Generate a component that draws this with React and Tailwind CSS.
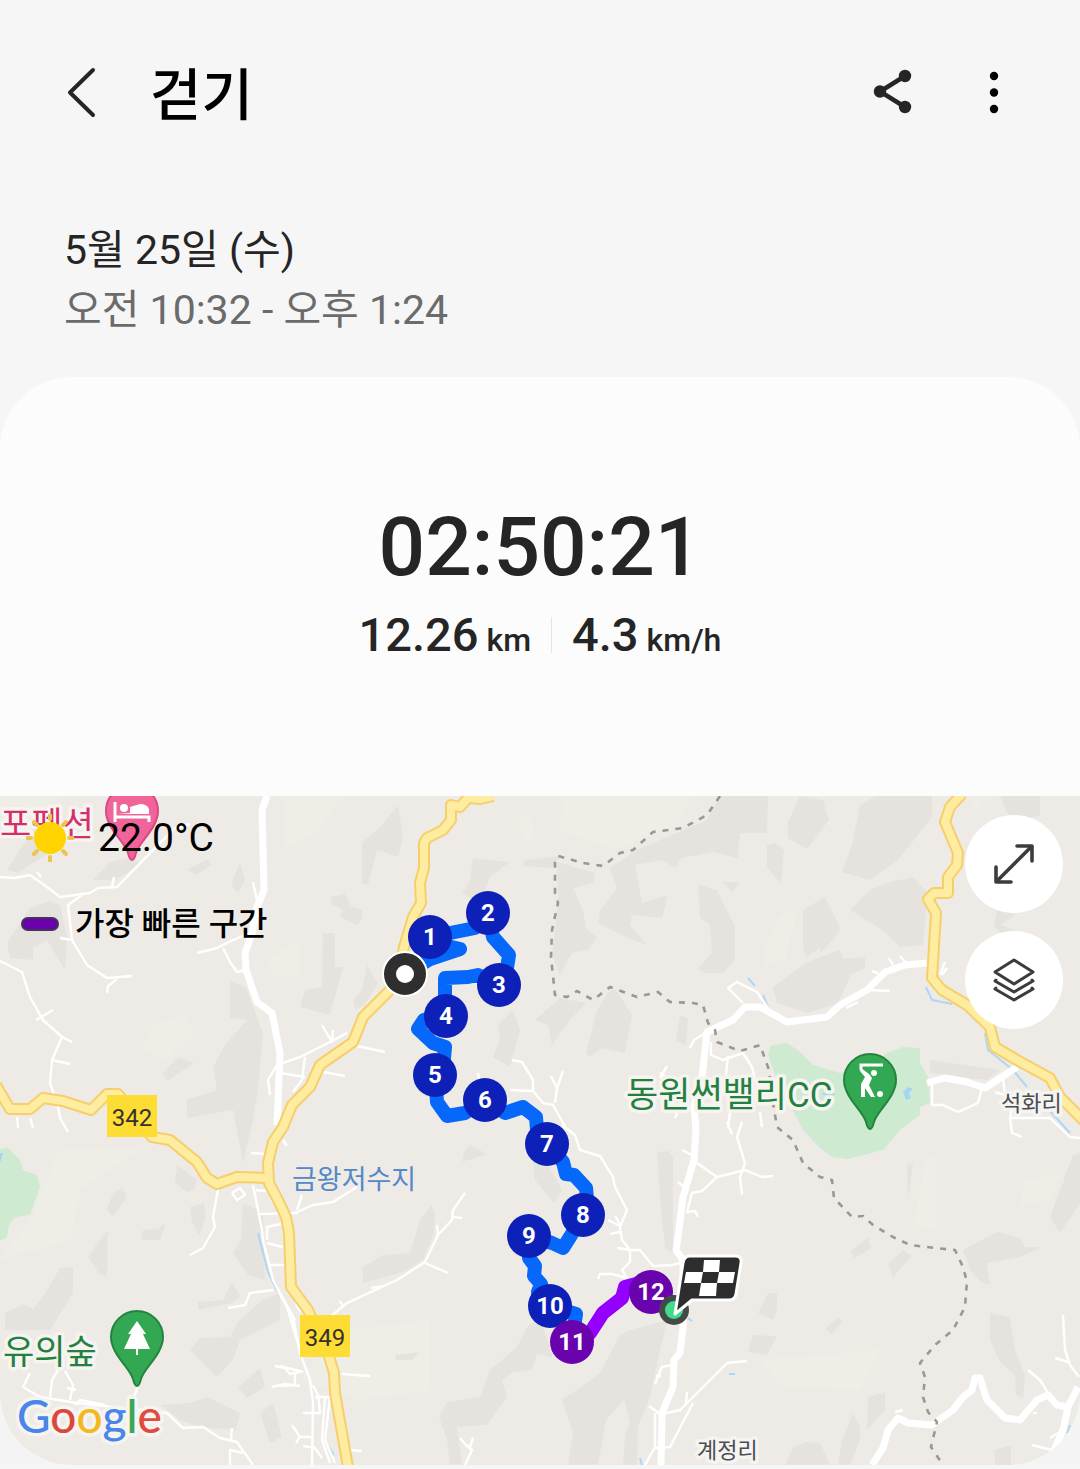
const MARKERS = [
  { n: 1, x: 430, y: 937 },
  { n: 2, x: 488, y: 913 },
  { n: 3, x: 499, y: 985 },
  { n: 4, x: 446, y: 1016 },
  { n: 5, x: 435, y: 1075 },
  { n: 6, x: 485, y: 1100 },
  { n: 7, x: 547, y: 1144 },
  { n: 8, x: 583, y: 1215 },
  { n: 9, x: 529, y: 1236 },
  { n: 10, x: 550, y: 1306 },
  { n: 11, x: 572, y: 1342, fast: true },
  { n: 12, x: 651, y: 1292, fast: true },
];

// darker hillside patches
const HILLS = [
  '768,796 767,833 740,833 738,858 713,852 682,858 675,868 662,860 635,865 642,903 668,895 662,918 632,915 630,925 647,945 625,937 598,923 600,910 617,888 610,868 637,850 660,840 707,820 720,796',
  '698,885 717,890 735,927 735,960 723,973 705,973 698,968 712,953 710,925 700,918',
  '800,796 823,800 829,820 807,849 788,838 788,822',
  '767,845 775,843 784,850 781,884 767,867',
  '825,897 840,927 817,950 807,957 803,950 803,910',
  '807,962 840,950 850,977 838,1003 807,1013 777,1003 773,987',
  '722,882 740,882 732,892',
  '557,862 595,873 593,883 573,888 583,910 586,928 597,938 588,950 572,953 560,975 552,955 558,903',
  '610,990 616,990 632,1015 625,1053 602,1048 590,1057 586,1053 597,1010',
  '560,998 586,1003 570,1020 552,1045 548,1025 535,1020',
  '680,1015 688,1018 686,1045 676,1040',
  '398,805 403,837 398,857 377,850 368,885 362,883 362,843 380,827',
  '323,933 335,933 335,967 343,967 330,1015 300,1007 305,990 322,987',
  '513,1010 520,1030 510,1067 493,1057 500,1038 498,1025',
  '473,858 510,862 490,877 480,903 462,893 470,880',
  '330,897 345,894 351,906 363,910 361,920 357,925 340,917 343,910 332,904',
  '525,860 560,856 552,868 523,866',
  '367,965 378,983 365,1005 355,1010 353,1000 362,990',
  '230,980 246,988 263,1033 258,1090 253,1120 243,1163 233,1110 187,1118 187,1100 217,1090 213,1067 225,1045 247,1020 230,1018',
  '7,943 30,908 50,901 60,905 67,937 65,970 47,940 33,948 33,960 10,958',
  '37,823 60,830 60,847 33,863 18,873 7,870',
  '93,880 110,862 133,857 140,865 115,880',
  '187,870 208,859 212,865 196,875',
  '240,862 245,880 238,893 231,885',
  '178,1057 194,1063 168,1081 162,1074',
  '73,1267 73,1293 50,1330 5,1330 5,1313 23,1304 33,1309 43,1297 60,1268',
  '280,1293 280,1320 240,1340 233,1360 217,1377 190,1350 200,1338 230,1337 238,1322 262,1300',
  '243,1203 263,1213 265,1280 248,1275 233,1253 241,1240',
  '160,1405 190,1403 207,1397 240,1413 236,1430 200,1427 180,1420',
  '108,1230 107,1278 98,1272 88,1257 96,1245',
  '122,1188 127,1197 113,1217 107,1210 113,1193',
  '177,1165 197,1180 194,1190 187,1192 175,1183',
  '190,1207 204,1203 206,1218 199,1235 192,1222',
  '143,1230 158,1229 166,1222 160,1240 141,1240',
  '260,1368 265,1387 247,1398 238,1387',
  '273,1403 282,1437 270,1443 260,1413',
  '198,1302 223,1300 232,1282 240,1296 232,1303 198,1310',
  '432,1205 435,1213 434,1233 423,1260 403,1272 363,1283 363,1267 383,1255 410,1253 420,1220',
  '464,1152 470,1145 487,1154 462,1162',
  '528,1128 545,1160 562,1190 554,1203 535,1180',
  '540,1317 527,1327 517,1347 490,1370 480,1397 447,1402 439,1417 447,1440 450,1465 462,1465 457,1427 487,1425 507,1397 502,1380 513,1372 532,1370 537,1353 553,1358',
  '395,1355 420,1352 412,1360 396,1360',
  '667,1320 658,1360 650,1397 638,1427 637,1465 623,1465 625,1435 630,1423 624,1400 606,1420 598,1465 568,1465 573,1433 563,1400 600,1373 620,1335 630,1330',
  '562,1400 580,1388 580,1465 568,1465 573,1433',
  '657,1152 668,1151 673,1157 673,1253 665,1247 660,1200',
  '768,1293 777,1293 777,1310 773,1320 758,1313',
  '753,1335 777,1336 767,1355 748,1352',
  '785,1465 793,1447 806,1442 820,1443 830,1465',
  '1073,1155 1080,1153 1080,1203 1060,1233 1050,1217',
  '963,1250 997,1232 1020,1238 1025,1247 1042,1247 1020,1257 987,1263 990,1285 982,1283 970,1270',
  '990,1313 1010,1317 1015,1350 1025,1375 1023,1398 1016,1395 1015,1375 1000,1362 990,1340',
  '868,1397 885,1392 885,1410 867,1430',
  '853,1413 860,1427 860,1440 850,1465 838,1465 842,1440',
  '868,1237 871,1248 855,1258 850,1252',
  '903,1250 912,1256 893,1277 888,1264',
  '838,1318 843,1322 831,1334 825,1328',
  '907,1165 913,1164 908,1200',
  '995,1450 1011,1445 1011,1465 995,1465',
  '860,805 875,796 932,796 932,817 918,835 898,860 870,880 842,872 852,845',
  '887,883 913,877 928,893 923,945 900,947 882,930 850,910 870,890',
  '820,900 840,930 833,940 820,953',
  '833,960 865,957 865,968 840,980 828,1000 822,985',
  '930,1060 1000,1070 987,1080 930,1073',
  '1000,925 1015,930 1010,945 994,925 998,905 1015,915',
  '1000,796 1040,796 1040,816 1010,820',
];

// pale meadow patches
const MEADOWS = [
  '0,796 60,796 20,830 0,840',
  '285,796 340,796 320,830 285,850',
  '268,960 300,940 300,975 275,978',
  '155,1025 185,1015 195,1035 165,1060 142,1047',
  '565,796 690,796 680,822 620,848 600,845 560,830',
  '520,815 532,818 535,835 528,842 520,832',
  '780,915 797,910 785,960 765,965 765,950',
  '60,1150 140,1150 80,1190 70,1240 0,1260 30,1220',
  '340,1330 430,1320 430,1390 360,1400 300,1380',
  '760,1360 880,1350 860,1390 780,1385',
  '925,1160 935,1156 935,1230 915,1225',
  '1025,1180 1060,1175 1050,1200 1020,1205',
  '970,796 990,796 975,812',
];

const BIG_ROADS = [
  '267,796 262,810 264,890 257,907 252,933 245,953 246,970 257,1002 272,1013 280,1053 277,1125',
  '927,963 905,965 885,972 867,990 840,1005 827,1017 787,1022 760,1007 745,1007 733,1020 707,1032 702,1077 694,1105 696,1130 694,1160 683,1197 678,1237 676,1250 683,1260 683,1327 680,1353 674,1360 673,1387 662,1413 661,1465',
  '927,1083 945,1078 967,1082 985,1088 1017,1067',
  '872,1465 883,1448 888,1430 898,1418 908,1423 932,1425 953,1410 963,1397 972,1390 975,1378 980,1378 987,1400 1005,1418 1020,1420 1037,1400 1048,1395 1057,1405 1068,1407 1078,1387',
  '1068,1407 1063,1430 1052,1455',
];

const SMALL_ROADS = [
  '0,877 15,878 30,875 47,887 60,897 90,893 98,888 117,887 153,850 175,828 190,824',
  '82,895 68,905 72,940 87,965 107,978 132,976', '107,993 108,986 117,979', '60,938 72,940', '112,887 114,877',
  '0,961 22,972 30,997 43,1020 62,1037 52,1060 50,1083 58,1107 60,1118 68,1132',
  '52,1060 70,1064', '62,1037 72,1042', '36,1020 53,1010', '17,1117 18,1128', '30,1118 33,1128', '37,872 41,877',
  '197,953 217,948 233,940 250,933', '223,948 230,962 237,972 245,970',
  '280,1064 300,1057 330,1042 347,1033', '357,1046 385,1052', '280,1073 305,1077', '313,1070 345,1076',
  '322,1025 332,1042 333,1030', '305,1057 302,1080 293,1092', '253,882 257,900', '270,1095 268,1080 277,1065',
  '512,1060 522,1062 533,1080 533,1091 510,1090', '533,1091 543,1103 553,1105 567,1130', '551,1076 557,1088 555,1103',
  '563,1071 557,1088', '478,1073 479,1080',
  '562,1125 575,1135 580,1150 600,1156 613,1177 615,1187 627,1210 620,1227 622,1240 630,1250 640,1250 653,1266 673,1265 682,1262',
  '630,1250 630,1262 622,1270 627,1278 612,1274 600,1274 598,1279', '608,1220 620,1226', '610,1234 620,1232', '615,1216 621,1226', '617,1248 630,1250',
  '697,1163 717,1177 745,1170 762,1177 773,1176', '742,1122 737,1137 745,1163 740,1177 742,1195',
  '717,1177 702,1191 692,1193 687,1212 695,1211 698,1217', '682,1150 694,1156', '678,1182 684,1187', '727,1122 732,1134',
  '662,1414 680,1410 703,1387 727,1363 747,1361', '693,1403 670,1447 655,1448', '655,1413 655,1447 645,1465',
  '672,1365 662,1367 655,1384', '649,1406 660,1414', '687,1392 686,1405', '656,1376 661,1376',
  '465,1193 453,1210 452,1220 438,1235 425,1262 397,1280 347,1303 330,1317', '425,1263 448,1273', '453,1217 462,1218', '437,1225 438,1235', '340,1301 343,1306', '371,1288 384,1286',
  '295,1213 313,1205 333,1202 357,1187', '297,1210 302,1195', '342,1374 370,1376', '350,1450 362,1451',
  '278,1290 293,1317 300,1353 310,1380 313,1403 312,1465', '315,1397 330,1397 325,1440 335,1463', '325,1397 322,1440 330,1463',
  '280,1366 303,1372', '280,1386 295,1385 295,1373', '292,1425 300,1437 312,1437', '303,1446 315,1448 322,1458', '303,1413 320,1413 318,1395 313,1385', '300,1436 296,1443',
  '460,1438 465,1444 472,1450 465,1465', '473,1438 470,1447',
  '218,1190 213,1217 215,1227 203,1248 190,1255', '253,1185 262,1230 263,1240 273,1280 287,1307 300,1350', '278,1290 295,1320',
  '273,1290 250,1293 245,1305 228,1308', '260,1214 298,1213', '267,1243 283,1247', '269,1265 284,1265', '267,1240 267,1227 285,1223',
  '232,1193 240,1188 245,1195 237,1200 232,1193', '251,1153 268,1154', '256,1190 266,1191',
  '275,1366 285,1368 290,1374 300,1372', '272,1387 285,1384 300,1386', '283,1140 287,1146', '296,1303 300,1312',
  '23,1387 40,1397 77,1403 113,1407 167,1413 183,1428 203,1427 220,1438 237,1442 253,1465',
  '23,1387 30,1373', '50,1397 52,1380 58,1370', '70,1400 73,1385 65,1371', '67,1388 76,1390', '138,1386 133,1400', '230,1465 230,1450 243,1453', '231,1440 232,1428', '75,1405 80,1400 105,1405',
  '743,1003 728,988 737,982 757,992 768,1008', '690,1048 694,1040 707,1032', '711,1042 711,1055 723,1060 743,1053 752,1067 755,1080', '728,1056 726,1075',
  '660,1078 667,1066', '660,1073 674,1083', '730,1112 728,1128', '760,1112 762,1127', '675,1118 678,1110',
  '932,1083 932,1105 943,1105 958,1112 978,1103 982,1088', '868,990 890,991', '846,1008 858,1002', '889,958 893,965', '900,956 906,963', '872,971 878,973',
  '940,975 945,962', '942,975 947,968',
  '1012,1107 1010,1118 1012,1133 1022,1137', '1010,1118 1050,1118 1070,1137 1080,1138', '1003,1078 1005,1095 995,1092',
  '1063,1315 1065,1350 1070,1365 1079,1377', '1028,1370 1040,1380 1048,1393', '1032,1445 1052,1450', '1055,1358 1068,1362', '895,1412 903,1410', '1033,1413 1037,1413', '1050,1438 1060,1432',
];

const STREAMS = [
  '258,1233 268,1272 278,1292', '985,1033 988,1050 1013,1070 1027,1087', '926,987 932,1000 952,1004',
  '1050,1111 1070,1133', '748,978 755,986', '763,995 768,1007', '326,1443 334,1455', '729,1374 735,1374', '688,1318 692,1321', '822,1094 835,1094',
  '640,1458 642,1465', '1067,1433 1070,1425',
];

const YELLOW_ROADS = [
  '493,796 480,799 468,798 460,807 451,805 451,820 443,830 427,838 424,843 424,868 420,883 421,903 413,917 404,947 397,977 390,990 363,1017 353,1042 320,1065 310,1087 292,1105 283,1127 273,1142 268,1163 269,1183 277,1198 286,1217 289,1233 291,1287 308,1310 328,1353 334,1373 335,1393 348,1467',
  '-4,1085 0,1092 10,1109 30,1109 43,1098 63,1101 91,1110 107,1094 118,1094 152,1137 170,1140 197,1162 207,1178 217,1184 237,1177 268,1178',
  '962,794 950,807 945,822 958,853 957,865 948,877 948,893 934,893 928,899 936,913 932,978 942,990 967,1005 990,1027 995,1047 1017,1060 1050,1078 1060,1097 1084,1121',
];

const BORDERS = [
  '720,796 707,815 683,828 653,832 633,850 620,853 603,866 583,863 558,856 555,862 555,893 558,903 552,930 551,957 555,995 567,997 577,991 593,1000 610,987 637,997 658,992 670,1002 693,1003 703,1005 708,1023 715,1030 717,1042 740,1051 760,1045 769,1070 773,1103 777,1127 793,1140 803,1163 820,1177 832,1180 834,1198 852,1217 863,1216 873,1225 893,1237 910,1245 935,1248 955,1250 963,1267 967,1282 966,1293 965,1307 953,1330 935,1345 920,1363 925,1377 923,1397 928,1412 937,1422 931,1447 941,1462',
];

const ROUTE =
  '405,974 430,959 460,949 443,945 430,937 455,932 475,928 488,913 493,937 509,955 507,968 499,985 478,975 468,977 445,978 445,995 446,1016 424,1020 418,1029 433,1043 445,1047 444,1058 435,1075 437,1102 447,1116 465,1113 485,1100 505,1113 523,1107 536,1117 537,1130 547,1144 563,1162 566,1174 574,1175 586,1188 587,1198 583,1215 570,1237 563,1248 552,1243 529,1236 529,1258 535,1266 534,1276 541,1284 538,1292 550,1306 576,1314 572,1342 557,1352';

const FAST_ROUTE = '572,1342 590,1333 603,1313 622,1298 625,1287 636,1284 651,1292';

const FONT = "font-[Roboto,'Noto_Sans_CJK_KR',sans-serif]";

const Lines = ({ items, className, width, dash }) => (
  <g className={className} fill="none" strokeWidth={width} strokeDasharray={dash} strokeLinejoin="round">
    {items.map((points) => <polyline key={points} points={points} />)}
  </g>
);

const Pin = ({ x, y, fill, stroke, children }) => (
  <g transform={`translate(${x} ${y})`}>
    <path d="M0 49C-2 49-3 46-4 42C-7 31-26 17-26 0A26 26 0 0 1 26 0C26 17 7 31 4 42C3 46 2 49 0 49Z" fill={fill} stroke={stroke} strokeWidth="2" />
    {children}
  </g>
);

const RoadBadge = ({ x, y, children }) => (
  <g>
    <rect x={x} y={y} width="50" height="42" fill="#fddc34" />
    <text x={x + 25} y={y + 31} textAnchor="middle" className="text-[24px]" fill="#33312b">{children}</text>
  </g>
);

const MapLabel = ({ x, y, className, children }) => (
  <text x={x} y={y} className={`[paint-order:stroke] stroke-[#f6f4f1] ${className}`} strokeWidth="7" strokeLinejoin="round">
    {children}
  </text>
);

const RouteMap = () => (
  <svg viewBox="0 796 1080 669" className="block w-full" role="img" aria-label="경로 지도">
    <rect y="796" width="1080" height="669" fill="#eeebe6" />
    <g fill="#eeeee6">{MEADOWS.map((p) => <polygon key={p} points={p} />)}</g>
    <g fill="#e6e3df">{HILLS.map((p) => <polygon key={p} points={p} />)}</g>
    <g fill="#ceead0">
      <path d="M0 1150L7 1147L20 1160L23 1170L37 1175L40 1187L30 1215L15 1217L9 1225L7 1237L0 1241Z" />
      <path d="M770 1046L787 1043L800 1052L813 1065L840 1073L870 1064L887 1053L903 1047L920 1048L920 1063L928 1077L930 1103L920 1107L920 1115L900 1130L883 1150L848 1159L832 1157L820 1148L803 1130L777 1080L768 1055Z" />
    </g>
    <path d="M0 1153L3 1153L0 1163ZM903 1092L908 1087L913 1089L909 1093L911 1098L906 1100Z" fill="#a5d5f5" />

    <Lines items={STREAMS} className="stroke-[#add7f3]" width="2" />
    <Lines items={SMALL_ROADS} className="stroke-white" width="2.4" />
    <Lines items={BIG_ROADS} className="stroke-white" width="7" />
    <Lines items={YELLOW_ROADS} className="stroke-[#f6cf6c]" width="12" />
    <Lines items={YELLOW_ROADS} className="stroke-[#feeda0]" width="8" />
    <Lines items={BORDERS} className="stroke-[#9b9894]" width="2.6" dash="6 7" />

    <RoadBadge x={107} y={1095}>342</RoadBadge>
    <RoadBadge x={300} y={1315}>349</RoadBadge>

    <MapLabel x={0} y={836} className="fill-[#d42e6b] text-[34px]">포펜션</MapLabel>
    <MapLabel x={626} y={1107} className="fill-[#24803f] text-[35px]">동원썬밸리CC</MapLabel>
    <MapLabel x={3} y={1364} className="fill-[#24803f] text-[34px]">유의숲</MapLabel>
    <MapLabel x={1001} y={1111} className="fill-[#4a4d52] text-[22px]">석화리</MapLabel>
    <MapLabel x={697} y={1458} className="fill-[#4a4d52] text-[22px]">계정리</MapLabel>
    <text x="292" y="1189" className="fill-[#5488c7] text-[27px]">금왕저수지</text>

    <Pin x={132} y={811} fill="#f0649a" stroke="#dc4682">
      <path d="M-17-9V11M-17 6H17V11" fill="none" stroke="#fff" strokeWidth="3" />
      <circle cx="-8" cy="-3" r="4" fill="#fff" />
      <path d="M-14 3H17V-2Q15-7 8-7L-2-4V2Z" fill="#fff" />
    </Pin>
    <Pin x={870} y={1080} fill="#33a852" stroke="#23843f">
      <path d="M-9-10V-15H13" fill="none" stroke="#fff" strokeWidth="3" />
      <circle cx="4" cy="-7" r="3" fill="#fff" />
      <path d="M-9-12L-1-6L2-2L-1 5L5 17H1L-5 8V17H-9V4L-5-3L-10-9Z" fill="#fff" />
      <circle cx="10" cy="14" r="3" fill="#fff" />
    </Pin>
    <Pin x={137} y={1337} fill="#33a852" stroke="#23843f">
      <path d="M0-16L9-3H6L13 12H1V18H-1V12H-13L-6-3H-9Z" fill="#fff" />
    </Pin>

    <text x="17" y="1433" className="stroke-[#f6f4f1] font-[Lato,sans-serif] text-[46px] font-medium [paint-order:stroke]" strokeWidth="7" strokeLinejoin="round">
      <tspan fill="#4a86e8">G</tspan>
      <tspan fill="#dc473c">o</tspan>
      <tspan fill="#f2b91c">o</tspan>
      <tspan fill="#4a86e8">g</tspan>
      <tspan fill="#3aa757">l</tspan>
      <tspan fill="#e04a3f">e</tspan>
    </text>

    <polyline points={ROUTE} fill="none" stroke="#0667fb" strokeWidth="14" strokeLinejoin="round" />
    <polyline points={FAST_ROUTE} fill="none" stroke="#9400fd" strokeWidth="14" strokeLinejoin="round" />

    {MARKERS.map(({ n, x, y, fast }) => (
      <g key={n}>
        <circle cx={x} cy={y} r="22" fill={fast ? '#6903ad' : '#0d20b8'} />
        <text x={x} y={y + 8} textAnchor="middle" fill="#fff" className="text-[24px] font-bold">{n}</text>
      </g>
    ))}

    {/* start and finish */}
    <circle cx="405" cy="974" r="22" fill="#2f2f2f" stroke="#fff" strokeWidth="2" />
    <circle cx="405" cy="974" r="9" fill="#fff" />
    <circle cx="674" cy="1310" r="15" fill="#444a48" />
    <circle cx="674" cy="1310" r="9" fill="#40dc8c" />
    <path d="M690 1256H735Q742 1256 741 1263L736 1294Q735 1300 729 1300H692L675 1314L683 1263Q684 1256 690 1256Z" fill="#2d2d2d" stroke="#fff" strokeWidth="3" strokeLinejoin="round" />
    <path d="M704 1260H720L719 1272H703ZM686 1272H703L701 1283H684ZM719 1272H735L733 1283H717ZM701 1283H717L716 1296H699Z" fill="#fff" />
  </svg>
);

const SunIcon = () => (
  <svg viewBox="0 0 48 48" className="size-12" aria-hidden="true">
    <path d="M24 1V5M24 43V47M1 24H5M43 24H47M8 8L11 11M37 37L40 40M40 8L37 11M11 37L8 40" stroke="#ebc64e" strokeWidth="4" strokeLinecap="round" />
    <circle cx="24" cy="24" r="16" fill="#ffd400" />
  </svg>
);

const MapButton = ({ label, children }) => (
  <button type="button" aria-label={label} className="flex size-[98px] items-center justify-center rounded-full bg-white">
    <svg viewBox="0 0 44 44" className="size-11" fill="none" stroke="#3c3c3c" strokeWidth="3.6" strokeLinecap="round" strokeLinejoin="round">
      {children}
    </svg>
  </button>
);

export default function App() {
  return (
    <div className={`min-h-screen bg-[#f6f6f6] text-[#252525] ${FONT}`}>
      <header className="flex items-center px-16 pt-[52px]">
        <button type="button" aria-label="뒤로" className="mr-[50px] flex h-[72px] w-9 items-center">
          <svg viewBox="0 0 36 52" className="h-[52px] w-9" fill="none" stroke="#252525" strokeWidth="4" strokeLinecap="round" strokeLinejoin="round">
            <path d="M29 4L6 26.500L29 49" />
          </svg>
        </button>
        <h1 className="flex-1 pt-2 text-[56px] leading-[72px] font-medium text-black">걷기</h1>
        <button type="button" aria-label="공유" className="mr-14 flex size-12 items-center justify-center">
          <svg viewBox="0 0 48 48" className="size-12">
            <path d="M37 8L12 23.500L37 39" fill="none" stroke="#252525" strokeWidth="4.500" />
            <g fill="#252525">
              <circle cx="12" cy="23.500" r="6.200" />
              <circle cx="37" cy="8" r="6.200" />
              <circle cx="37" cy="39" r="6.200" />
            </g>
          </svg>
        </button>
        <button type="button" aria-label="더보기" className="flex h-12 w-11 items-center justify-center">
          <svg viewBox="0 0 44 48" className="h-12 w-11">
            <circle cx="22" cy="8" r="4.200" />
            <circle cx="22" cy="24.500" r="4.200" />
            <circle cx="22" cy="41" r="4.200" />
          </svg>
        </button>
      </header>

      <div className="px-16 pt-[88px] pb-[37px] text-[41px] leading-[60px]">
        <p>5월 25일 (수)</p>
        <p className="text-[#6b6b6b]">오전 10:32 - 오후 1:24</p>
      </div>

      <main className="rounded-t-[72px] bg-[#fcfcfc]">
        <section className="pt-[122px] pb-[133px] text-center font-medium">
          <p className="text-[82px] leading-[96px]">02:50:21</p>
          <div className="mt-3 flex items-center justify-center text-[47px] leading-[56px]">
            <p className="flex items-baseline gap-2">12.26 <span className="text-[32px] leading-none">km</span></p>
            <span className="mx-5 h-9 w-px bg-[#e4e4e4]" />
            <p className="flex items-baseline gap-2">4.3 <span className="text-[32px] leading-none">km/h</span></p>
          </div>
        </section>

        <section className="bg-[#f4f4f4]">
          <div className="relative overflow-hidden rounded-b-[72px]">
            <RouteMap />
            <div className="absolute top-4 left-[21px] text-black">
              <div className="flex items-center pl-[5px]">
                <SunIcon />
                <span className="ml-6 text-[39px] leading-[52px]">22.0°C</span>
              </div>
              <div className="mt-9 flex items-center">
                <span className="h-[14px] w-[38px] rounded-full border-2 border-[#43325a] bg-[#6a00ae]" />
                <span className="ml-4 text-[32px] leading-[48px] font-medium">가장 빠른 구간</span>
              </div>
            </div>
            <div className="absolute top-[19px] right-[17px] flex flex-col gap-[18px]">
              <MapButton label="지도 확대">
                <path d="M5 39L39 5M25 4H40V19M4 25V40H19" />
              </MapButton>
              <MapButton label="지도 유형">
                <path d="M22 2L41 14L22 26L3 14ZM4 22L3 23L22 34L41 23L40 22M4 30L3 31L22 42L41 31L40 30" strokeWidth="3" />
              </MapButton>
            </div>
          </div>
        </section>
      </main>
    </div>
  );
}
